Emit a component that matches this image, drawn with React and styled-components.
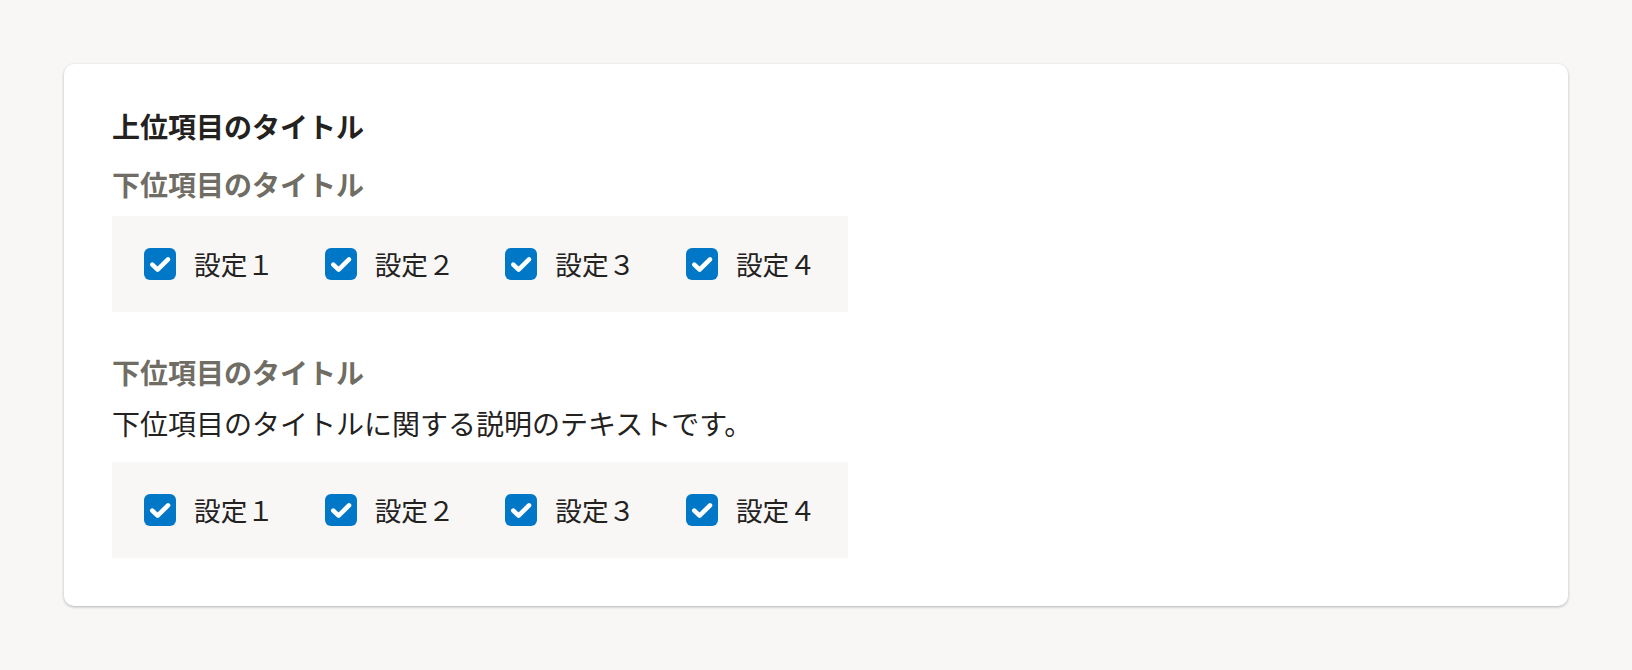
import React from 'react';
import styled, { createGlobalStyle } from 'styled-components';

const GlobalStyle = createGlobalStyle`
  html, body {
    margin: 0;
    padding: 0;
    background: #f8f7f6;
  }
  body {
    font-family: "Noto Sans CJK JP", "Noto Sans", sans-serif;
    color: #23221e;
  }
`

const Page = styled.div`
  padding: 64px;
  min-height: 670px;
  box-sizing: border-box;
`

const Card = styled.section`
  background: #fff;
  border-radius: 10px;
  box-shadow: 0 1px 3px rgba(3, 3, 2, 0.28);
  padding: 48px;
  display: flex;
  flex-direction: column;
  align-items: flex-start;
`

const Title = styled.h2`
  margin: 0;
  font-size: 28px;
  line-height: 28px;
  font-weight: 700;
  color: #23221e;
`

const Section = styled.div`
  display: flex;
  flex-direction: column;
  align-items: flex-start;
  margin-top: ${(p) => p.$top}px;
`

const SubTitle = styled.h3`
  margin: 0;
  font-size: 28px;
  line-height: 28px;
  font-weight: 700;
  color: #706d65;
`

const Description = styled.p`
  margin: 16px 0 0;
  font-size: 28px;
  line-height: 1.5;
  color: #23221e;
`

const CheckGroup = styled.div`
  display: inline-flex;
  align-items: center;
  gap: 50.67px;
  padding: 32px;
  margin-top: ${(p) => p.$top}px;
  background: #f8f7f6;
`

const CheckItem = styled.label`
  display: flex;
  align-items: center;
  gap: 18px;
  cursor: pointer;
`

const Box = styled.span`
  width: 32px;
  height: 32px;
  border-radius: 6px;
  background: #0077c7;
  display: flex;
  align-items: center;
  justify-content: center;
  flex-shrink: 0;
`

const Label = styled.span`
  font-size: 26.67px;
  line-height: 32px;
  color: #23221e;
  white-space: nowrap;
`

const labels = ['設定１', '設定２', '設定３', '設定４']

function Checkbox({ label }) {
  return (
    <CheckItem>
      <Box>
        <svg width="32" height="32" viewBox="0 0 32 32" fill="none">
          <path d="M8.3 16.6 L13.6 21.6 L24 11.4" stroke="#fff" strokeWidth="4.6" strokeLinecap="round" strokeLinejoin="round" />
        </svg>
      </Box>
      <Label>{label}</Label>
    </CheckItem>
  )
}

function Checks({ top }) {
  return (
    <CheckGroup $top={top}>
      {labels.map((l) => (
        <Checkbox key={l} label={l} />
      ))}
    </CheckGroup>
  )
}

function App() {
  return (
    <Page>
      <GlobalStyle />
      <Card>
        <Title>上位項目のタイトル</Title>

        <Section $top={30}>
          <SubTitle>下位項目のタイトル</SubTitle>
          <Checks top={18} />
        </Section>

        <Section $top={46}>
          <SubTitle>下位項目のタイトル</SubTitle>
          <Description>下位項目のタイトルに関する説明のテキストです。</Description>
          <Checks top={18} />
        </Section>
      </Card>
    </Page>
  );
}

export default App;
